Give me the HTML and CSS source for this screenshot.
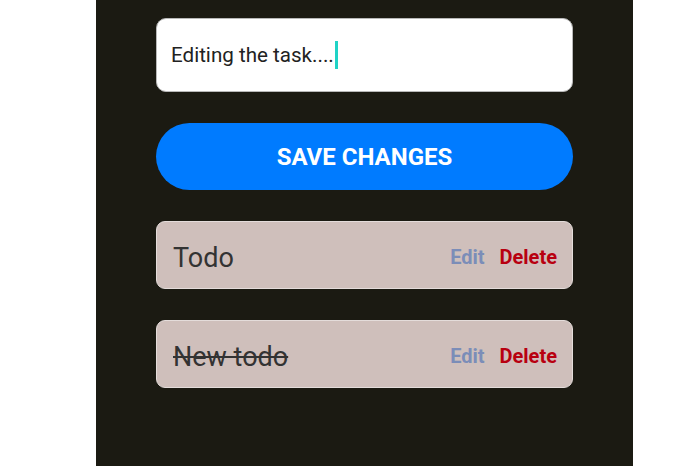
FILE: index.html
```html
<!DOCTYPE html>
<html>
<head>
<meta charset="utf-8">
<link rel="stylesheet" href="styles.css">
</head>
<body>
<div class="panel">
  <div class="input"><span class="input-text">Editing the task....</span><span class="caret"></span></div>
  <button class="save">SAVE CHANGES</button>
  <div class="card">
    <span class="title">Todo</span>
    <div class="actions"><span class="edit">Edit</span><span class="delete">Delete</span></div>
  </div>
  <div class="card">
    <span class="title done">New todo</span>
    <div class="actions"><span class="edit">Edit</span><span class="delete">Delete</span></div>
  </div>
</div>
</body>
</html>
```
FILE: styles.css
```css
html, body {
  margin: 0;
  padding: 0;
  background: #ffffff;
  font-family: Roboto, "Liberation Sans", sans-serif;
}
.panel {
  margin-left: 96px;
  width: 537px;
  height: 466px;
  background: #1b1a12;
  box-sizing: border-box;
  padding: 18px 60px 0 60px;
  display: flex;
  flex-direction: column;
  gap: 31px;
}
.input {
  height: 74px;
  box-sizing: border-box;
  background: #ffffff;
  border: 1px solid #b8b8b8;
  border-radius: 10px;
  display: flex;
  align-items: center;
  padding-left: 14px;
}
.input-text {
  font-size: 20.6px;
  color: #222222;
}
.caret {
  display: inline-block;
  width: 3px;
  height: 28px;
  background: #1fd3c6;
  margin-left: 1px;
}
.save {
  height: 67px;
  border: none;
  border-radius: 34px;
  background: #007bff;
  color: #ffffff;
  font-family: Roboto, "Liberation Sans", sans-serif;
  font-weight: 700;
  font-size: 24px;
  padding: 0;
}
.card {
  height: 68px;
  box-sizing: border-box;
  background: #cfbfbb;
  border: 1px solid #e4dcda;
  border-radius: 9px;
  display: flex;
  align-items: center;
  justify-content: space-between;
  padding: 3px 15px 0 16px;
}
.title {
  font-size: 27px;
  color: #333333;
  padding-top: 2px;
}
.title.done {
  text-decoration: line-through;
}
.actions {
  display: flex;
  gap: 15px;
  font-weight: 700;
  font-size: 20px;
}
.edit {
  color: #7b8db8;
}
.delete {
  color: #b80010;
}
```
